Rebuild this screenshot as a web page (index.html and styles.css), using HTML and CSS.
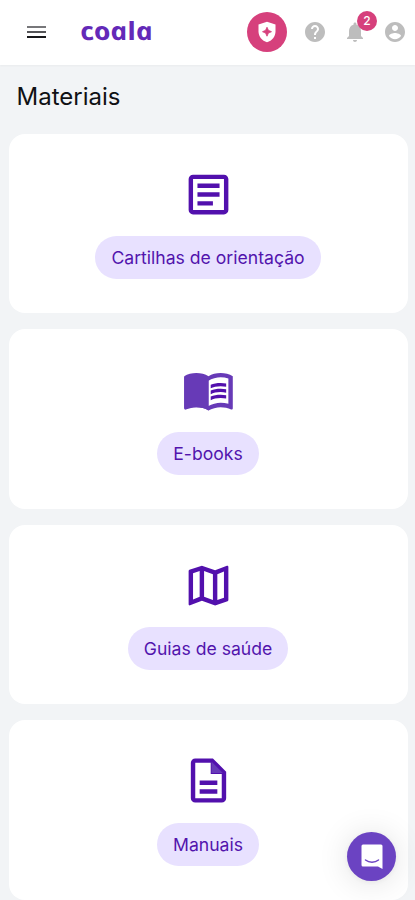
FILE: index.html
```
<!DOCTYPE html>
<html lang="pt-BR">
<head>
    <meta charset="UTF-8">
    <meta name="viewport" content="width=device-width, initial-scale=1.0">
    <title>Coala - Materiais</title>
    <link rel="stylesheet" href="styles.css">
</head>
<body>
    <header class="topbar">
        <button class="menu-button" aria-label="Menu">
            <span class="bar bar-light"></span>
            <span class="bar bar-mid"></span>
            <span class="bar"></span>
        </button>
        <a class="logo" href="#">coala</a>
        <nav class="actions">
            <a class="shield" href="#">
                <svg width="24" height="24" viewBox="0 0 24 24"><path fill="#fff" d="M12 1.8 3.5 4.6v7C3.5 16.500 7 20.900 12 22.300c5-1.400 8.500-5.800 8.500-10.700v-7z"/><path fill="#d6407c" d="M12 7.200l1.400 3.100 3.100 1.400-3.100 1.400-1.400 3.100-1.400-3.100-3.100-1.400 3.100-1.400z" stroke="#d6407c" stroke-width=".8"/></svg>
            </a>
            <a class="action" href="#">
                <svg width="24" height="24" viewBox="0 0 24 24"><path d="M12 2C6.480 2 2 6.480 2 12s4.480 10 10 10 10-4.480 10-10S17.520 2 12 2zm1 17h-2v-2h2v2zm2.070-7.750-.9.920C13.450 12.900 13 13.500 13 15h-2v-.5c0-1.100.45-2.100 1.170-2.830l1.240-1.260c.37-.36.59-.86.59-1.410 0-1.100-.9-2-2-2s-2 .9-2 2H8c0-2.210 1.790-4 4-4s4 1.790 4 4c0 .88-.36 1.680-.93 2.250z"/></svg>
            </a>
            <a class="action" href="#">
                <svg width="24" height="24" viewBox="0 0 24 24"><path d="M12 22c1.100 0 2-.9 2-2h-4c0 1.100.89 2 2 2zm6-6v-5c0-3.070-1.640-5.640-4.500-6.320V4c0-.83-.67-1.500-1.500-1.500s-1.500.67-1.500 1.500v.68C7.630 5.360 6 7.920 6 11v5l-2 2v1h16v-1l-2-2z"/></svg>
                <span class="badge">2</span>
            </a>
            <a class="action" href="#">
                <svg width="24" height="24" viewBox="0 0 24 24"><path d="M12 2C6.480 2 2 6.480 2 12s4.480 10 10 10 10-4.480 10-10S17.520 2 12 2zm0 3c1.660 0 3 1.340 3 3s-1.340 3-3 3-3-1.340-3-3 1.340-3 3-3zm0 14.200c-2.500 0-4.710-1.280-6-3.220.03-1.990 4-3.080 6-3.080 1.990 0 5.970 1.090 6 3.080-1.290 1.940-3.500 3.220-6 3.220z"/></svg>
            </a>
        </nav>
    </header>

    <main class="content">
        <h1>Materiais</h1>

        <section class="card">
            <svg class="card-icon" viewBox="0 0 24 24"><path d="M19 5v14H5V5h14m0-2H5c-1.100 0-2 .9-2 2v14c0 1.100.9 2 2 2h14c1.100 0 2-.9 2-2V5c0-1.100-.9-2-2-2z"/><path d="M14 17H7v-2h7v2zm3-4H7v-2h10v2zm0-4H7V7h10v2z"/></svg>
            <a class="pill" href="#">Cartilhas de orientação</a>
        </section>

        <section class="card">
            <svg class="card-icon" viewBox="0 0 24 24"><path class="soft" d="M12 6.500C10.550 5.400 8.450 5 6.500 5S2.450 5.400 1 6.500V20.600C2.900 20 4.800 20 6.500 20c1.950 0 4.050.4 5.500 1.500z"/><path d="M17.500 4.500c-1.950 0-4.050.4-5.500 1.500-1.450-1.100-3.550-1.500-5.500-1.500S2.450 4.900 1 6v14.650c0 .65.730.45.750.45C3.100 20.450 5.050 20 6.500 20c1.950 0 4.050.4 5.500 1.500 1.350-.85 3.800-1.500 5.500-1.500 1.650 0 3.350.3 4.750 1.050.41.210.75-.19.750-.45V6c-1.490-1.120-3.630-1.500-5.500-1.500zm3.500 14c-1.100-.35-2.300-.5-3.500-.5-1.700 0-4.150.65-5.500 1.500V8c1.350-.85 3.800-1.500 5.500-1.500 1.200 0 2.400.15 3.500.5v11.500z" class="soft"/><path d="M17.500 10.500c.88 0 1.730.09 2.500.26V9.240c-.79-.15-1.640-.24-2.500-.24-1.700 0-3.240.29-4.500.83v1.660c1.130-.64 2.700-.99 4.500-.99zM13 12.490v1.660c1.130-.64 2.700-.99 4.500-.99.88 0 1.730.09 2.500.26V11.900c-.79-.15-1.640-.24-2.500-.24-1.700 0-3.240.3-4.500.83zM17.500 14.330c-1.700 0-3.240.29-4.500.83v1.660c1.130-.64 2.700-.99 4.500-.99.88 0 1.730.09 2.500.26v-1.520c-.79-.16-1.640-.24-2.500-.24z"/></svg>
            <a class="pill" href="#">E-books</a>
        </section>

        <section class="card">
            <svg class="card-icon" viewBox="0 0 24 24"><path d="M20.500 3l-.16.030L15 5.100 9 3 3.360 4.900c-.21.070-.36.250-.36.480V20.500c0 .28.220.5.500.5l.16-.030L9 18.900l6 2.100 5.640-1.900c.21-.070.36-.25.360-.48V3.500c0-.28-.22-.5-.5-.5zM10 5.470l4 1.400v11.660l-4-1.400V5.470zm-5 .99l3-1.010v11.700l-3 1.160V6.460zm14 11.080l-3 1.010V6.860l3-1.160v11.840z"/></svg>
            <a class="pill" href="#">Guias de saúde</a>
        </section>

        <section class="card">
            <svg class="card-icon" viewBox="0 0 24 24"><path d="M8 16h8v2H8zm0-4h8v2H8zm6-10H6c-1.100 0-2 .9-2 2v16c0 1.100.89 2 1.990 2H18c1.100 0 2-.9 2-2V8l-6-6zm4 18H6V4h7v5h5v11z"/><path class="soft" d="M13.400 3.500v5.100h5.100z"/></svg>
            <a class="pill" href="#">Manuais</a>
        </section>
    </main>

    <button class="chat-button" aria-label="Chat">
        <svg width="24" height="28" viewBox="0 0 24 28"><path fill="#fff" d="M3 1.500h18a1.500 1.500 0 0 1 1.500 1.500v23l-4.500-2.500H3A1.500 1.500 0 0 1 1.500 22V3A1.500 1.500 0 0 1 3 1.500z"/><path fill="none" stroke="#6b43c2" stroke-width="1.500" stroke-linecap="round" d="M5.500 17c3.800 3 9.200 3 13 0"/></svg>
    </button>
</body>
</html>
```
FILE: styles.css
```
* {
    margin: 0;
    padding: 0;
    box-sizing: border-box;
}

body {
    font-family: Inter, sans-serif;
    height: 900px;
    overflow: hidden;
    background: #f2f4f6;
    color: #101114;
}

a {
    text-decoration: none;
}

button {
    border: none;
    cursor: pointer;
}

/* Top bar */
.topbar {
    height: 65px;
    display: flex;
    align-items: center;
    padding: 0 8px 2px 27px;
    background: #fff;
    box-shadow: 0 1px 2px rgba(0, 0, 0, 0.04);
}

.menu-button {
    display: flex;
    flex-direction: column;
    gap: 3px;
    width: 19px;
    background: none;
}

.bar {
    height: 2px;
    background: #17171a;
}

.bar-light {
    background: #77777a;
}

.bar-mid {
    background: #555558;
}

/* Upright version of the italic, for the round "a" */
.logo {
    margin: 0 0 3px 35px;
    font-family: "Open Sans", sans-serif;
    font-size: 25px;
    font-style: italic;
    font-weight: 700;
    line-height: 36px;
    color: #6329b8;
    transform: scaleX(1.14) skewX(12deg);
    transform-origin: 0 70%;
}

.actions {
    display: flex;
    align-items: center;
    gap: 16px;
    margin-left: auto;
}

.shield {
    display: flex;
    align-items: center;
    justify-content: center;
    width: 40px;
    height: 40px;
    border-radius: 50%;
    background: #d6407c;
}

.action {
    position: relative;
    width: 24px;
    height: 24px;
}

.action svg {
    display: block;
    fill: #bdbdbd;
}

.badge {
    position: absolute;
    top: -9px;
    right: -10px;
    width: 20px;
    height: 20px;
    border-radius: 50%;
    background: #d6407c;
    color: #fff;
    font-size: 12px;
    font-weight: 500;
    line-height: 20px;
    text-align: center;
}

/* Material cards */
.content {
    display: flex;
    flex-direction: column;
    gap: 16px;
    padding: 16px 7.5px 0 8.5px;
}

h1 {
    height: 36.5px;
    padding-left: 8px;
    font-size: 24px;
    font-weight: 400;
    line-height: 31px;
}

.card {
    display: flex;
    flex-direction: column;
    align-items: center;
    gap: 15.5px;
    height: 179.5px;
    padding-top: 34px;
    border-radius: 16px;
    background: #fff;
}

.card-icon {
    width: 53px;
    height: 53px;
    fill: #5210ad;
}

.soft {
    fill: #673ab7;
}

.pill {
    height: 43px;
    padding: 0 16px;
    border-radius: 22px;
    background: #e8e1ff;
    color: #5214ad;
    font-size: 17.6px;
    line-height: 43px;
}

/* Floating chat button */
.chat-button {
    position: fixed;
    right: 19px;
    bottom: 19px;
    display: flex;
    align-items: center;
    justify-content: center;
    width: 49px;
    height: 49px;
    border-radius: 50%;
    background: #6b43c2;
    box-shadow: 0 1px 6px rgba(0, 0, 0, 0.06), 0 2px 32px rgba(0, 0, 0, 0.12);
}
```
